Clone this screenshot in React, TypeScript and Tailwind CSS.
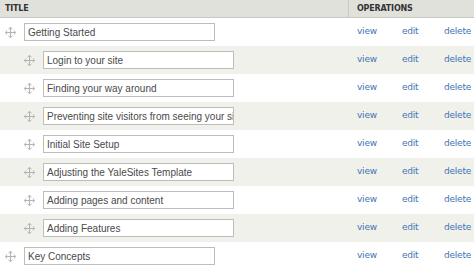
const items = [
  { title: "Getting Started", depth: 0 },
  { title: "Login to your site", depth: 1 },
  { title: "Finding your way around", depth: 1 },
  { title: "Preventing site visitors from seeing your site", depth: 1 },
  { title: "Initial Site Setup", depth: 1 },
  { title: "Adjusting the YaleSites Template", depth: 1 },
  { title: "Adding pages and content", depth: 1 },
  { title: "Adding Features", depth: 1 },
  { title: "Key Concepts", depth: 0 },
]

function DragHandle() {
  return (
    <svg width="11" height="11" viewBox="0 0 11 11" className="shrink-0">
      <path d="M5.5 0.5v10M0.5 5.5h10" stroke="#b3b3b3" strokeWidth="1.1" />
      <path d="M3.5 2l2-1.5 2 1.5M3.5 9l2 1.5 2-1.5M2 3.5l-1.5 2 1.5 2M9 3.5l1.5 2-1.5 2" stroke="#b3b3b3" fill="none" strokeWidth="1" />
    </svg>
  )
}

export default function App() {
  return (
    <div className="w-[474px] h-[267px] overflow-hidden bg-white font-['DejaVu_Sans',sans-serif]">
      <div className="flex h-[18px] bg-[#e1e1dc] border-b border-[#c9c9c4] text-[8px] font-bold text-[#333] tracking-tight">
        <div className="w-[349px] pl-[5px] flex items-center border-r border-[#c9c9c4]">TITLE</div>
        <div className="flex-1 pl-[8px] flex items-center">OPERATIONS</div>
      </div>
      {items.map((item, i) => (
        <div
          key={i}
          className={`flex items-center h-[28px] ${i % 2 === 1 ? "bg-[#f1f1ec]" : "bg-white"}`}
        >
          <div className={`w-[349px] flex items-center ${item.depth ? "pl-[24px]" : "pl-[5px]"}`}>
            <DragHandle />
            <div className="ml-[8px] w-[191px] h-[18px] border border-[#bdbdbd] bg-white flex items-center px-[3px] overflow-hidden whitespace-nowrap font-['Liberation_Sans',sans-serif] text-[10px] text-[#4a4a4a]">
              <span className="whitespace-nowrap">{item.title}</span>
            </div>
          </div>
          <div className="flex-1 flex items-center text-[9px] text-[#3e74b4] tracking-tight">
            <span className="ml-[8px] w-[45px]">view</span>
            <span className="w-[42px]">edit</span>
            <span>delete</span>
          </div>
        </div>
      ))}
    </div>
  )
}
